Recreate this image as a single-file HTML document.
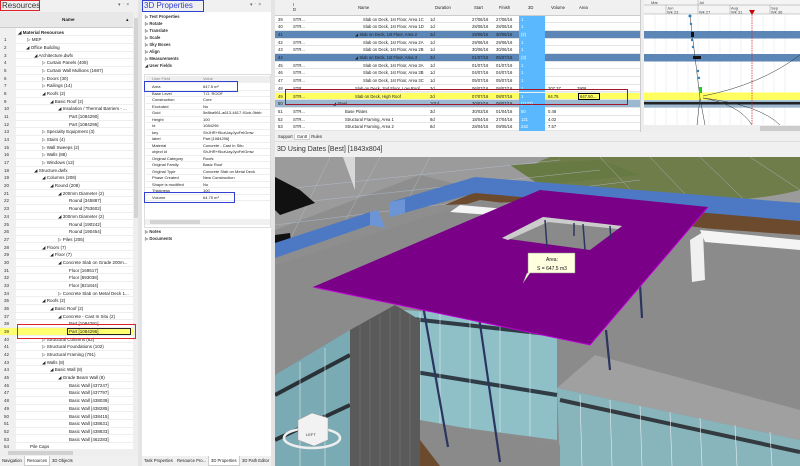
<!DOCTYPE html>
<html><head><meta charset="utf-8"><style>
*{margin:0;padding:0;box-sizing:border-box}
body{width:800px;height:466px;overflow:hidden;background:#f0f0f0;font-family:"Liberation Sans",sans-serif;font-size:4.5px;color:#222;position:relative}
.a{position:absolute;white-space:nowrap}
.tr{position:absolute;left:0;width:133px;height:7.68px;line-height:7.68px;border-bottom:1px solid #eee}
.tr b{font-weight:normal;position:absolute;left:4px;color:#333}
.tr i{font-style:normal;position:absolute}
.g{position:absolute;left:275px;width:365px;height:7.7px;line-height:7.7px;border-bottom:1px solid #e4e4e4;background:#fff;font-size:4.2px}
.g span{position:absolute}
.pr{position:absolute;left:146px;width:124px;height:6.5px;line-height:6.5px;border-bottom:1px solid #eee;font-size:4px}
.pr span{position:absolute}
.tab{position:absolute;top:456px;height:10px;line-height:10px;font-size:4.2px;padding:0 2px}
</style></head><body>
<!-- Left panel -->
<div class="a" style="left:0;top:0;width:138px;height:456px;background:#fff"></div>
<div class="a" style="left:0;top:0;width:138px;height:12px;background:#f0f0f0"></div>
<div class="a" style="left:0;top:0;width:40px;height:11px;border:1.5px solid #e0202a;font-size:8px;line-height:9px;padding-left:1px;color:#333">Resources</div>
<div class="a" style="left:118px;top:2px;font-size:5px;color:#666">▾ ᛫ ×</div>
<div class="a" style="left:0;top:12px;width:133px;height:16px;background:#e8e8e8;border-bottom:1px solid #ccc"></div>
<div class="a" style="left:62px;top:17px;font-weight:bold;font-size:4.6px">Name</div>
<div class="a" style="left:126px;top:17px;font-size:5px">▴</div>
<div class="a" style="left:0;top:28px;width:16px;height:428px;background:#f0f0f0"></div>
<div class="a" style="left:133px;top:12px;width:5px;height:444px;background:#eee"></div>
<div class="a" style="left:133.5px;top:18px;width:4px;height:200px;background:#d4d4d4"></div>
<div class="a" style="left:0;top:449px;width:133px;height:7px;background:#eee"></div>
<div class="a" style="left:8px;top:450px;width:65px;height:5px;background:#d0d0d0"></div>

<div class="tr" style="top:28.5px"><i style="left:18px;font-weight:bold">◢ Material Resources</i></div>
<div class="tr" style="top:36.2px"><b>1</b><i style="left:27px">▷ MEP</i></div>
<div class="tr" style="top:43.9px"><b>2</b><i style="left:26px">◢ Office Building</i></div>
<div class="tr" style="top:51.5px"><b>3</b><i style="left:34px">◢ Architecture.dwfx</i></div>
<div class="tr" style="top:59.2px"><b>4</b><i style="left:42px">▷ Curtain Panels (408)</i></div>
<div class="tr" style="top:66.9px"><b>5</b><i style="left:42px">▷ Curtain Wall Mullions (1687)</i></div>
<div class="tr" style="top:74.6px"><b>6</b><i style="left:42px">▷ Doors (30)</i></div>
<div class="tr" style="top:82.3px"><b>7</b><i style="left:42px">▷ Railings (14)</i></div>
<div class="tr" style="top:89.9px"><b>8</b><i style="left:42px">◢ Roofs (2)</i></div>
<div class="tr" style="top:97.6px"><b>9</b><i style="left:50px">◢ Basic Roof (2)</i></div>
<div class="tr" style="top:105.3px"><b>10</b><i style="left:58px">◢ Insulation / Thermal Barriers - ...</i></div>
<div class="tr" style="top:113px"><b>11</b><i style="left:69px">Part [1084290]</i></div>
<div class="tr" style="top:120.7px"><b>12</b><i style="left:69px">Part [1084295]</i></div>
<div class="tr" style="top:128.3px"><b>13</b><i style="left:42px">▷ Specialty Equipment (3)</i></div>
<div class="tr" style="top:136px"><b>14</b><i style="left:42px">▷ Stairs (4)</i></div>
<div class="tr" style="top:143.7px"><b>15</b><i style="left:42px">▷ Wall Sweeps (2)</i></div>
<div class="tr" style="top:151.4px"><b>16</b><i style="left:42px">▷ Walls (88)</i></div>
<div class="tr" style="top:159px"><b>17</b><i style="left:42px">▷ Windows (12)</i></div>
<div class="tr" style="top:166.7px"><b>18</b><i style="left:34px">◢ Structure.dwfx</i></div>
<div class="tr" style="top:174.4px"><b>19</b><i style="left:42px">◢ Columns (208)</i></div>
<div class="tr" style="top:182.1px"><b>20</b><i style="left:50px">◢ Round (208)</i></div>
<div class="tr" style="top:189.8px"><b>21</b><i style="left:58px">◢ 200mm Diameter (2)</i></div>
<div class="tr" style="top:197.4px"><b>22</b><i style="left:69px">Round [345887]</i></div>
<div class="tr" style="top:205.1px"><b>23</b><i style="left:69px">Round [753602]</i></div>
<div class="tr" style="top:212.8px"><b>24</b><i style="left:58px">◢ 300mm Diameter (2)</i></div>
<div class="tr" style="top:220.5px"><b>25</b><i style="left:69px">Round [190242]</i></div>
<div class="tr" style="top:228.2px"><b>26</b><i style="left:69px">Round [190454]</i></div>
<div class="tr" style="top:235.8px"><b>27</b><i style="left:58px">▷ Piles (205)</i></div>
<div class="tr" style="top:243.5px"><b>28</b><i style="left:42px">◢ Floors (7)</i></div>
<div class="tr" style="top:251.2px"><b>29</b><i style="left:50px">◢ Floor (7)</i></div>
<div class="tr" style="top:258.9px"><b>30</b><i style="left:58px">◢ Concrete Slab on Grade 200m...</i></div>
<div class="tr" style="top:266.6px"><b>31</b><i style="left:69px">Floor [169517]</i></div>
<div class="tr" style="top:274.2px"><b>32</b><i style="left:69px">Floor [693038]</i></div>
<div class="tr" style="top:281.9px"><b>33</b><i style="left:69px">Floor [821844]</i></div>
<div class="tr" style="top:289.6px"><b>34</b><i style="left:58px">▷ Concrete Slab on Metal Deck 1...</i></div>
<div class="tr" style="top:297.3px"><b>35</b><i style="left:42px">◢ Roofs (2)</i></div>
<div class="tr" style="top:305px"><b>36</b><i style="left:50px">◢ Basic Roof (2)</i></div>
<div class="tr" style="top:312.6px"><b>37</b><i style="left:58px">◢ Concrete - Cast In Situ (2)</i></div>
<div class="tr" style="top:320.3px"><b>38</b><i style="left:69px">Part [1084291]</i></div>
<div class="tr" style="top:328px;background:#ffff70"><b>39</b><i style="left:67px;width:64px;height:7px;line-height:6px;top:0.3px;border:1px solid #222;padding-left:1px">Part [1084296]</i></div>
<div class="tr" style="top:335.7px"><b>40</b><i style="left:42px">▷ Structural Columns (62)</i></div>
<div class="tr" style="top:343.4px"><b>41</b><i style="left:42px">▷ Structural Foundations (102)</i></div>
<div class="tr" style="top:351px"><b>42</b><i style="left:42px">▷ Structural Framing (791)</i></div>
<div class="tr" style="top:358.7px"><b>43</b><i style="left:42px">◢ Walls (8)</i></div>
<div class="tr" style="top:366.4px"><b>44</b><i style="left:50px">◢ Basic Wall (8)</i></div>
<div class="tr" style="top:374.1px"><b>45</b><i style="left:58px">◢ Grade Beam Wall (8)</i></div>
<div class="tr" style="top:381.8px"><b>46</b><i style="left:69px">Basic Wall [437247]</i></div>
<div class="tr" style="top:389.4px"><b>47</b><i style="left:69px">Basic Wall [437797]</i></div>
<div class="tr" style="top:397.1px"><b>48</b><i style="left:69px">Basic Wall [438039]</i></div>
<div class="tr" style="top:404.8px"><b>49</b><i style="left:69px">Basic Wall [438285]</i></div>
<div class="tr" style="top:412.5px"><b>50</b><i style="left:69px">Basic Wall [438415]</i></div>
<div class="tr" style="top:420.2px"><b>51</b><i style="left:69px">Basic Wall [438631]</i></div>
<div class="tr" style="top:427.8px"><b>52</b><i style="left:69px">Basic Wall [438833]</i></div>
<div class="tr" style="top:435.5px"><b>53</b><i style="left:69px">Basic Wall [462283]</i></div>
<div class="tr" style="top:443.2px"><b>54</b><i style="left:30px">Pile Caps</i></div>
<div class="a" style="left:17px;top:323.5px;width:119px;height:15.5px;border:1.5px solid #e0202a"></div>

<div class="tab" style="left:0">Navigation</div>
<div class="tab" style="left:24px;background:#fff;border:1px solid #ccc;border-top:none">Resources</div>
<div class="tab" style="left:50px">3D Objects</div>

<div class="a" style="left:138px;top:0;width:4px;height:466px;background:#e4e4e4"></div>

<!-- Properties panel -->
<div class="a" style="left:142px;top:0;width:129px;height:456px;background:#fff"></div>
<div class="a" style="left:142px;top:0;width:129px;height:12px;background:#f0f0f0"></div>
<div class="a" style="left:142px;top:0;width:62px;height:12px;border:1.5px solid #3040d0;font-size:8px;line-height:9px;padding-left:1px;color:#3040d0">3D Properties</div>
<div class="a" style="left:250px;top:2px;font-size:5px;color:#666">▾ ᛫ ×</div>
<div class="a" style="left:145px;top:13px;line-height:7px;font-weight:bold;font-size:4.2px;color:#333">
<div>▷ Test Properties</div><div>▷ Rotate</div><div>▷ Translate</div><div>▷ Scale</div><div>▷ Sky Boxes</div><div>▷ Align</div><div>▷ Measurements</div><div>◢ User Fields</div></div>
<div class="a" style="left:144px;top:74px;width:127px;height:154px;border:1px solid #ddd;background:#fff"></div>
<div class="pr" style="top:76px;background:#eee;color:#888"><span style="left:6px">User Field</span><span style="left:57px">Value</span></div>
<div class="pr" style="top:84px"><span style="left:6px">Area</span><span style="left:57px">647.5 m²</span></div>
<div class="pr" style="top:90.5px"><span style="left:6px">Base Level</span><span style="left:57px">T.O. ROOF</span></div>
<div class="pr" style="top:97px"><span style="left:6px">Construction</span><span style="left:57px">Core</span></div>
<div class="pr" style="top:103.5px"><span style="left:6px">Excluded</span><span style="left:57px">No</span></div>
<div class="pr" style="top:110px"><span style="left:6px">Guid</span><span style="left:57px">5e8ba961-a613-4617-91cb-0bbb</span></div>
<div class="pr" style="top:116.5px"><span style="left:6px">Height</span><span style="left:57px">100</span></div>
<div class="pr" style="top:123px"><span style="left:6px">Id</span><span style="left:57px">1084296</span></div>
<div class="pr" style="top:129.5px"><span style="left:6px">key</span><span style="left:57px">ShJHR+f5czUayJyoFelGmw</span></div>
<div class="pr" style="top:136px"><span style="left:6px">label</span><span style="left:57px">Part [1084296]</span></div>
<div class="pr" style="top:142.5px"><span style="left:6px">Material</span><span style="left:57px">Concrete - Cast In Situ</span></div>
<div class="pr" style="top:149px"><span style="left:6px">object id</span><span style="left:57px">ShJHR+f5czUayJyoFelGmw</span></div>
<div class="pr" style="top:155.5px"><span style="left:6px">Original Category</span><span style="left:57px">Roofs</span></div>
<div class="pr" style="top:162px"><span style="left:6px">Original Family</span><span style="left:57px">Basic Roof</span></div>
<div class="pr" style="top:168.5px"><span style="left:6px">Original Type</span><span style="left:57px">Concrete Slab on Metal Deck</span></div>
<div class="pr" style="top:175px"><span style="left:6px">Phase Created</span><span style="left:57px">New Construction</span></div>
<div class="pr" style="top:181.5px"><span style="left:6px">Shape is modified</span><span style="left:57px">No</span></div>
<div class="pr" style="top:188px"><span style="left:6px">Thickness</span><span style="left:57px">100</span></div>
<div class="pr" style="top:194.5px"><span style="left:6px">Volume</span><span style="left:57px">64.75 m³</span></div>
<div class="a" style="left:144px;top:81px;width:94px;height:11px;border:1.5px solid #3040d0"></div>
<div class="a" style="left:144px;top:192px;width:91px;height:11px;border:1.5px solid #3040d0"></div>
<div class="a" style="left:145px;top:219px;width:125px;height:6px;background:#f0f0f0"></div>
<div class="a" style="left:150px;top:220px;width:50px;height:4px;background:#d4d4d4"></div>
<div class="a" style="left:145px;top:228px;line-height:7px;font-weight:bold;font-size:4.2px;color:#333"><div>▷ Notes</div><div>▷ Documents</div></div>
<div class="tab" style="left:142px">Task Properties</div>
<div class="tab" style="left:175px">Resource Pro...</div>
<div class="tab" style="left:208px;background:#fff;border:1px solid #ccc;border-top:none">3D Properties</div>
<div class="tab" style="left:240px">3D Path Editor</div>

<div class="a" style="left:271px;top:0;width:4px;height:466px;background:#e4e4e4"></div>

<!-- Gantt table -->
<div class="a" style="left:275px;top:0;width:525px;height:140px;background:#f0f0f0"></div>
<div class="a" style="left:275px;top:0;width:365px;height:16px;background:#f0f0f0;border-bottom:1px solid #ccc;font-size:4.2px">
<span class="a" style="left:18px;top:2px;line-height:5px">I<br>D</span>
<span class="a" style="left:83px;top:5px">Name</span><span class="a" style="left:160px;top:5px">Duration</span>
<span class="a" style="left:199px;top:5px">Start</span><span class="a" style="left:224px;top:5px">Finish</span>
<span class="a" style="left:253px;top:5px">3D</span><span class="a" style="left:276px;top:5px">Volume</span><span class="a" style="left:304px;top:5px">Area</span></div>
<div class="g" style="top:15.5px"><span style="left:3px">39</span><span style="left:18px">STR...</span><span style="left:88px">Slab on Deck, 1st Floor, Area 1C</span><span style="left:155px">1d</span><span style="left:197px">27/06/16</span><span style="left:221px">27/06/16</span><span style="left:244px;width:26px;height:7.7px;background:#5ab8ff;color:#fff;padding-left:2px">1</span></div>
<div class="g" style="top:23.2px"><span style="left:3px">40</span><span style="left:18px">STR...</span><span style="left:88px">Slab on Deck, 1st Floor, Area 1D</span><span style="left:155px">1d</span><span style="left:197px">28/06/16</span><span style="left:221px">28/06/16</span><span style="left:244px;width:26px;height:7.7px;background:#5ab8ff;color:#fff;padding-left:2px">1</span></div>
<div class="g" style="top:30.9px;background:#5b86b6"><span style="left:3px">41</span><span style="left:80px">◢ Slab on Deck, 1st Floor, Area 2</span><span style="left:155px">2d</span><span style="left:197px">29/06/16</span><span style="left:221px">30/06/16</span><span style="left:244px;width:26px;height:7.7px;background:#5ab8ff;color:#fff;padding-left:2px">(2)</span></div>
<div class="g" style="top:38.6px"><span style="left:3px">42</span><span style="left:18px">STR...</span><span style="left:88px">Slab on Deck, 1st Floor, Area 2A</span><span style="left:155px">1d</span><span style="left:197px">29/06/16</span><span style="left:221px">29/06/16</span><span style="left:244px;width:26px;height:7.7px;background:#5ab8ff;color:#fff;padding-left:2px">1</span></div>
<div class="g" style="top:46.3px"><span style="left:3px">43</span><span style="left:18px">STR...</span><span style="left:88px">Slab on Deck, 1st Floor, Area 2B</span><span style="left:155px">1d</span><span style="left:197px">30/06/16</span><span style="left:221px">30/06/16</span><span style="left:244px;width:26px;height:7.7px;background:#5ab8ff;color:#fff;padding-left:2px">1</span></div>
<div class="g" style="top:54px;background:#5b86b6"><span style="left:3px">44</span><span style="left:80px">◢ Slab on Deck, 1st Floor, Area 3</span><span style="left:155px">3d</span><span style="left:197px">01/07/16</span><span style="left:221px">05/07/16</span><span style="left:244px;width:26px;height:7.7px;background:#5ab8ff;color:#fff;padding-left:2px">(3)</span></div>
<div class="g" style="top:61.7px"><span style="left:3px">45</span><span style="left:18px">STR...</span><span style="left:88px">Slab on Deck, 1st Floor, Area 3A</span><span style="left:155px">1d</span><span style="left:197px">01/07/16</span><span style="left:221px">01/07/16</span><span style="left:244px;width:26px;height:7.7px;background:#5ab8ff;color:#fff;padding-left:2px">1</span></div>
<div class="g" style="top:69.4px"><span style="left:3px">46</span><span style="left:18px">STR...</span><span style="left:88px">Slab on Deck, 1st Floor, Area 3B</span><span style="left:155px">1d</span><span style="left:197px">04/07/16</span><span style="left:221px">04/07/16</span><span style="left:244px;width:26px;height:7.7px;background:#5ab8ff;color:#fff;padding-left:2px">1</span></div>
<div class="g" style="top:77.1px"><span style="left:3px">47</span><span style="left:18px">STR...</span><span style="left:88px">Slab on Deck, 1st Floor, Area 3C</span><span style="left:155px">1d</span><span style="left:197px">05/07/16</span><span style="left:221px">05/07/16</span><span style="left:244px;width:26px;height:7.7px;background:#5ab8ff;color:#fff;padding-left:2px">1</span></div>
<div class="g" style="top:84.8px"><span style="left:3px">48</span><span style="left:18px">STR...</span><span style="left:80px">Slab on Deck, 2nd Floor, Low Roof</span><span style="left:155px">3d</span><span style="left:197px">06/07/16</span><span style="left:221px">08/07/16</span><span style="left:244px;width:26px;height:7.7px;background:#5ab8ff;color:#fff;padding-left:2px">1</span><span style="left:273px">207.37</span><span style="left:302px">2906</span></div>
<div class="g" style="top:92.5px;background:#ffff60"><span style="left:3px">49</span><span style="left:18px">STR...</span><span style="left:80px">Slab on Deck, High Roof</span><span style="left:155px">2d</span><span style="left:197px">07/07/16</span><span style="left:221px">08/07/16</span><span style="left:244px;width:26px;height:7.7px;background:#5ab8ff;color:#fff;padding-left:2px">1</span><span style="left:273px">64.75</span><span style="left:303px;width:22px;height:7px;border:1px solid #000;line-height:5.5px;padding-left:1px">647.50...</span></div>
<div class="g" style="top:100.2px;background:#9cb8d0"><span style="left:3px">50</span><span style="left:58px">◢ Steel</span><span style="left:155px">101d</span><span style="left:197px">30/03/16</span><span style="left:221px">08/07/16</span><span style="left:244px;width:26px;height:7.7px;background:#5ab8ff;color:#fff;padding-left:2px">(1173)</span></div>
<div class="g" style="top:107.9px"><span style="left:3px">51</span><span style="left:18px">STR...</span><span style="left:70px">Base Plates</span><span style="left:155px">3d</span><span style="left:197px">30/03/16</span><span style="left:221px">01/04/16</span><span style="left:244px;width:26px;height:7.7px;background:#5ab8ff;color:#fff;padding-left:2px">50</span><span style="left:273px">0.48</span></div>
<div class="g" style="top:115.6px"><span style="left:3px">52</span><span style="left:18px">STR...</span><span style="left:70px">Structural Framing, Area 1</span><span style="left:155px">8d</span><span style="left:197px">18/04/16</span><span style="left:221px">27/04/16</span><span style="left:244px;width:26px;height:7.7px;background:#5ab8ff;color:#fff;padding-left:2px">121</span><span style="left:273px">4.02</span></div>
<div class="g" style="top:123.3px"><span style="left:3px">53</span><span style="left:18px">STR...</span><span style="left:70px">Structural Framing, Area 2</span><span style="left:155px">8d</span><span style="left:197px">28/04/16</span><span style="left:221px">09/05/16</span><span style="left:244px;width:26px;height:7.7px;background:#5ab8ff;color:#fff;padding-left:2px">242</span><span style="left:273px">7.57</span></div>
<div class="a" style="left:285px;top:89px;width:343px;height:16px;border:1.5px solid #a01828"></div>
<div class="a" style="left:640px;top:0;width:4px;height:132px;background:#eee;border-left:1px solid #ccc"></div>

<svg class="a" style="left:644px;top:0" width="156" height="132" viewBox="644 0 156 132">
<rect x="644" y="0" width="156" height="132" fill="#fff"/>
<rect x="644" y="0" width="156" height="14" fill="#f4f4f4"/>
<g stroke="#888" stroke-width=".4"><line x1="644" y1="5" x2="800" y2="5"/><line x1="644" y1="14" x2="800" y2="14"/><line x1="698" y1="0" x2="698" y2="14"/><line x1="730" y1="5" x2="730" y2="14"/><line x1="666" y1="5" x2="666" y2="14"/><line x1="770" y1="5" x2="770" y2="14"/></g>
<g font-size="4" fill="#444"><text x="651" y="4">Mar</text><text x="699" y="4">Jul</text><text x="667" y="9.5">Jun</text><text x="667" y="13.5">Wk 23</text><text x="699" y="13.5">Wk 27</text><text x="731" y="9.5">Aug</text><text x="731" y="13.5">Wk 31</text><text x="771" y="9.5">Sep</text><text x="771" y="13.5">Wk 36</text></g>
<g stroke="#dde6f0" stroke-width=".5">
<line x1="655" y1="14" x2="655" y2="125"/><line x1="666" y1="14" x2="666" y2="125"/><line x1="677" y1="14" x2="677" y2="125"/><line x1="688" y1="14" x2="688" y2="125"/><line x1="698" y1="14" x2="698" y2="125"/><line x1="709" y1="14" x2="709" y2="125"/><line x1="720" y1="14" x2="720" y2="125"/><line x1="730" y1="14" x2="730" y2="125"/><line x1="741" y1="14" x2="741" y2="125"/><line x1="752" y1="14" x2="752" y2="125"/><line x1="763" y1="14" x2="763" y2="125"/><line x1="774" y1="14" x2="774" y2="125"/><line x1="785" y1="14" x2="785" y2="125"/></g>
<rect x="644" y="31" width="156" height="7.5" fill="#5b86b6"/>
<rect x="644" y="54" width="156" height="7.5" fill="#5b86b6"/>
<rect x="644" y="92.5" width="156" height="7.5" fill="#ffff60"/>
<rect x="644" y="100.2" width="156" height="7.5" fill="#9cb8d0"/>
<rect x="644" y="102" width="156" height="2.5" fill="#222"/>
<line x1="752" y1="10" x2="752" y2="125" stroke="#e02020" stroke-width=".7" stroke-dasharray="1.5,1"/>
<polygon points="749,10 755,10 752,15" fill="#c00"/>
<g stroke="#333" stroke-width=".5" fill="none"><path d="M690 16 L700 98 L705 125"/><path d="M703 96 Q760 85 800 55"/><path d="M703 98 Q760 105 780 125"/><path d="M703 98 Q740 105 752 125"/><path d="M700 98 L697 125"/></g>
<g fill="#2a7fc0"><circle cx="690" cy="16" r="1.5"/><circle cx="691" cy="24" r="1.2"/><circle cx="692" cy="40" r="1.2"/><circle cx="693" cy="47" r="1.2"/><circle cx="698" cy="71" r="1.2"/><circle cx="699" cy="78" r="1.2"/></g>
<rect x="691" y="32" width="3" height="5" fill="#111"/><rect x="693" y="56" width="8" height="3" fill="#111"/>
<rect x="699" y="87" width="3" height="6" fill="#2c2"/>
<rect x="644" y="125" width="156" height="7" fill="#eee"/><rect x="760" y="126" width="40" height="5" fill="#ccc"/>
</svg>

<div class="a" style="left:275px;top:132px;width:525px;height:9px;background:#f0f0f0;font-size:4.2px;line-height:9px"><span style="margin-left:3px">Support</span> <span style="background:#fff;padding:0 2px;border:1px solid #ccc;border-top:none">Gantt</span> <span>Rules</span></div>
<div class="a" style="left:275px;top:141px;width:525px;height:16px;background:#f0f0f0;font-size:7px;line-height:16px;padding-left:2px;color:#333;border-top:1px solid #ddd">3D Using Dates [Best] [1843x804]</div>

<svg class="a" style="left:275px;top:157px" width="525" height="309" viewBox="275 157 525 309">
<rect x="275" y="157" width="525" height="309" fill="#8e8e8e"/>
<polygon points="275,157 800,157 800,215 520,200 420,175 275,230" fill="#9b9b9b"/>
<ellipse cx="680" cy="172" rx="150" ry="30" fill="#6f7d4a"/>
<polygon points="510,165 600,160 640,175 540,185" fill="#687a44"/>
<g stroke="#b8c8dc" stroke-width=".5" opacity=".7"><path d="M275 190 L560 160 M275 205 L600 170 M275 225 L640 180 M330 157 L290 240 M380 157 L340 230 M430 157 L400 215 M600 157 L640 200 M650 157 L700 210 M700 157 L760 215 M750 157 L800 190"/></g>
<polygon points="343,157 355,157 355,190" fill="#d8d8d8"/>
<polygon points="275,177 300,190 315,203 280,215 275,210" fill="#111"/>
<polygon points="275,235 290,233 292,250 275,253" fill="#111"/>
<polygon points="445,205 480,190 800,218 800,235 700,228 560,200" fill="#6b4a2e"/>
<polygon points="275,243 370,212 370,225 275,258" fill="#4d79c4"/>
<polygon points="370,212 378,210 385,228 370,225" fill="#6b95d6"/>
<polygon points="390,202 475,177 475,193 390,217" fill="#4d79c4"/>
<polygon points="390,202 405,199 405,213 390,217" fill="#6b95d6"/>
<polygon points="475,177 800,203 800,221 475,193" fill="#4d79c4"/>
<polygon points="275,265 480,200 800,240 800,466 275,466" fill="#8b8b8b"/>
<polygon points="450,212 460,205 540,212 530,218" fill="#f4f4f4"/>
<polygon points="700,230 800,240 800,250 705,242" fill="#f4f4f4"/>
<polygon points="690,240 703,232 705,280 692,282" fill="#f0f0f0"/>
<polygon points="557,388 595,355 800,410 800,440" fill="#a0a0a0"/>
<polygon points="557,388 800,440 800,466 560,466" fill="#88b4bc"/>
<g stroke="#333a40" stroke-width="4"><line x1="560" y1="400" x2="800" y2="452"/></g>
<g stroke="#e8eef0" stroke-width=".6"><line x1="580" y1="395" x2="582" y2="466"/><line x1="610" y1="400" x2="612" y2="466"/><line x1="640" y1="406" x2="642" y2="466"/><line x1="670" y1="412" x2="672" y2="466"/><line x1="700" y1="418" x2="702" y2="466"/><line x1="735" y1="425" x2="737" y2="466"/><line x1="770" y1="432" x2="772" y2="466"/></g>
<polygon points="403,310 557,320 557,440 403,420" fill="#8fc0c8"/>
<g stroke="#2f3c45" stroke-width="4"><line x1="403" y1="318" x2="557" y2="335"/><line x1="403" y1="370" x2="557" y2="395"/></g>
<g stroke="#dfeaed" stroke-width=".6"><line x1="420" y1="312" x2="420" y2="422"/><line x1="440" y1="313" x2="440" y2="425"/><line x1="470" y1="315" x2="470" y2="428"/><line x1="500" y1="317" x2="500" y2="432"/><line x1="530" y1="319" x2="530" y2="436"/></g>
<polygon points="420,420 560,445 560,466 400,466" fill="#8a8a8a"/>
<polygon points="380,445 420,440 440,466 370,466" fill="#6b4a2e"/>
<polygon points="275,375 350,330 350,466 275,466" fill="#7aaab4"/>
<g stroke="#2a3238" stroke-width="4"><line x1="275" y1="395" x2="350" y2="355"/><line x1="275" y1="440" x2="350" y2="405"/></g>
<g stroke="#dfeaed" stroke-width=".6"><line x1="300" y1="362" x2="300" y2="466"/><line x1="325" y1="348" x2="325" y2="466"/></g>
<polygon points="350,330 395,305 420,320 420,466 350,466" fill="#5a5a5a"/>
<g stroke="#777" stroke-width=".6"><line x1="360" y1="325" x2="360" y2="466"/><line x1="370" y1="320" x2="370" y2="466"/><line x1="380" y1="315" x2="380" y2="466"/><line x1="390" y1="310" x2="390" y2="466"/><line x1="400" y1="310" x2="400" y2="466"/><line x1="410" y1="315" x2="410" y2="466"/></g>
<g stroke="#2c3560" stroke-width="2.2"><line x1="422" y1="300" x2="448" y2="447"/><line x1="478" y1="310" x2="500" y2="462"/><line x1="606" y1="330" x2="610" y2="370"/><line x1="640" y1="285" x2="642" y2="318"/></g>
<polygon points="313,287 540,190 708,207 590,345" fill="#7a0087"/>
<polyline points="313,287 590,345 708,207" fill="none" stroke="#c000d8" stroke-width="1"/>
<polygon points="502,238 543,217 622,226 590,250" fill="#8a8a8a"/>
<polygon points="502,238 543,217 622,226 618,229 548,222 508,240" fill="#ccc"/>
<g stroke="#2c3560" stroke-width="1.5"><line x1="545" y1="220" x2="547" y2="247"/><line x1="583" y1="224" x2="585" y2="250"/><line x1="610" y1="226" x2="611" y2="240"/><line x1="574" y1="223" x2="574" y2="236"/></g>
<polygon points="528,253 575,253 575,273 530,273 523,283 527,273 528,273" fill="#ffffe0" stroke="#888" stroke-width=".5"/>
<text x="552" y="261" font-size="5" text-anchor="middle" fill="#111">Area:</text>
<text x="552" y="270" font-size="5" text-anchor="middle" fill="#111">S = 647.5 m3</text>
<ellipse cx="312" cy="438" rx="28" ry="10" fill="none" stroke="#eee" stroke-width="2.5"/>
<polygon points="298,420 312,413 328,418 328,440 314,446 298,440" fill="#f2f2f2" stroke="#999" stroke-width=".5"/>
<text x="306" y="436" font-size="4" fill="#333">LEFT</text>
</svg>
</body></html>
